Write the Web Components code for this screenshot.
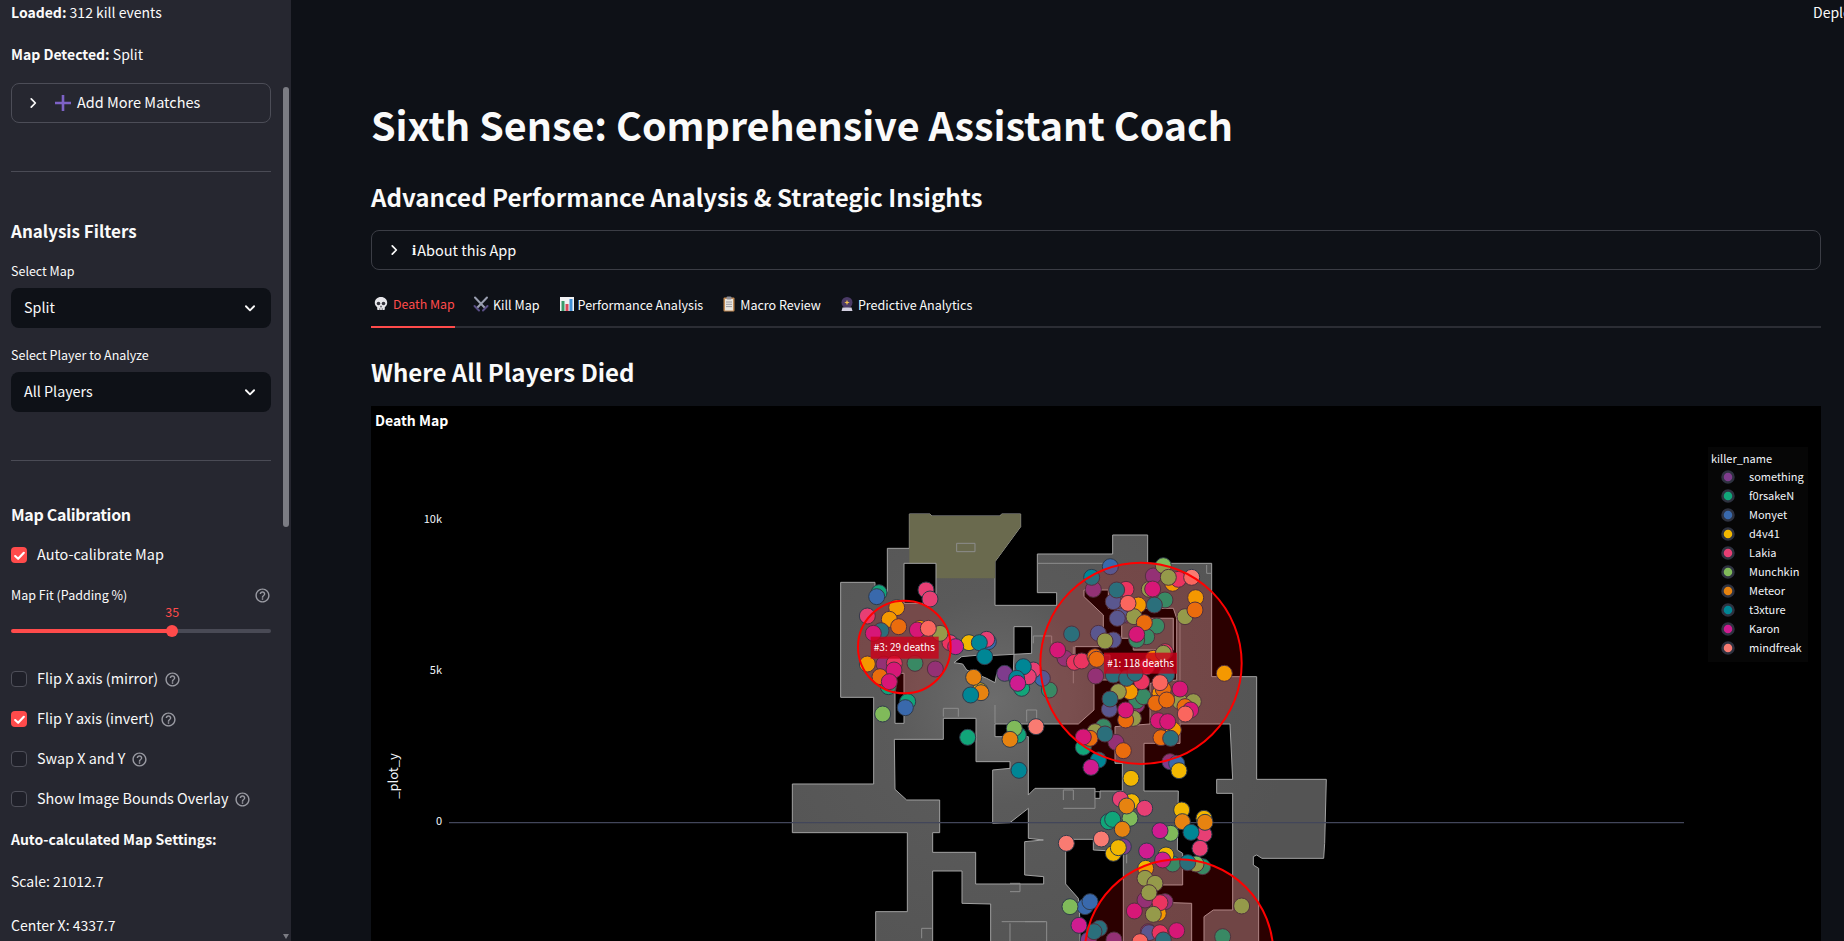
<!DOCTYPE html>
<html lang="en"><head><meta charset="utf-8"><title>Sixth Sense</title>
<style>
html,body{margin:0;height:100%;overflow:hidden;background:#0e1117}
body{font-family:"Noto Sans CJK SC","Source Sans Pro",sans-serif;color:#fafafa;font-size:14px}
</style></head><body>
<app-shell>
  <side-bar slot="side">
    <md-line style="margin-top:2px"><b>Loaded:</b> 312 kill events</md-line>
    <md-line style="margin-top:20px"><b>Map Detected:</b> Split</md-line>
    <st-expander style="margin-top:17px" compact><plus-icon slot="icon"></plus-icon>Add More Matches</st-expander>
    <side-rule style="margin-top:48px"></side-rule>
    <side-head style="margin-top:44px;font-size:17px">Analysis Filters</side-head>
    <st-select style="margin-top:15px" label="Select Map">Split</st-select>
    <st-select style="margin-top:17px" label="Select Player to Analyze">All Players</st-select>
    <side-rule style="margin-top:48px"></side-rule>
    <side-head style="margin-top:38px;font-size:16px;letter-spacing:-.33px">Map Calibration</side-head>
    <st-check style="margin-top:16px" checked>Auto-calibrate Map</st-check>
    <st-slider style="margin-top:20px" label="Map Fit (Padding %)" value="35" pct="62"></st-slider>
    <st-check style="margin-top:29px" help>Flip X axis (mirror)</st-check>
    <st-check style="margin-top:20px" checked help>Flip Y axis (invert)</st-check>
    <st-check style="margin-top:20px" help>Swap X and Y</st-check>
    <st-check style="margin-top:20px" help>Show Image Bounds Overlay</st-check>
    <md-line style="margin-top:20px"><b>Auto-calculated Map Settings:</b></md-line>
    <md-line style="margin-top:20px">Scale: 21012.7</md-line>
    <md-line style="margin-top:22px">Center X: 4337.7</md-line>
  </side-bar>
  <main-panel slot="main">
    <page-title level="1" style="margin-top:96px">Sixth Sense: Comprehensive Assistant Coach</page-title>
    <page-title level="2" style="margin-top:25px">Advanced Performance Analysis &amp; Strategic Insights</page-title>
    <st-expander style="margin-top:13px"><b slot="icon" style="font-family:'Liberation Serif',serif;font-size:15px;margin-right:-3px">i</b>About this App</st-expander>
    <tab-bar style="margin-top:16px"></tab-bar>
    <page-title level="3" style="margin-top:24px">Where All Players Died</page-title>
    <death-map style="margin-top:14px"></death-map>
  </main-panel>
</app-shell>
<script>
const def=(n,html,extra={})=>{customElements.define(n,class extends HTMLElement{
  connectedCallback(){ if(this.shadowRoot)return; const r=this.attachShadow({mode:'open'}); r.innerHTML=typeof html==='function'?html(this):html; extra.init&&extra.init(this,r);} });};
const chev='<svg width="14" height="14" viewBox="0 0 24 24" fill="none" stroke="#fafafa" stroke-width="3" stroke-linecap="round" stroke-linejoin="round"><path d="M9 5l7 7-7 7"/></svg>';
const help='<svg width="17" height="17" viewBox="0 0 24 24" fill="#9a9ba3"><path d="M11 18h2v-2h-2v2zm1-16C6.480 2 2 6.480 2 12s4.480 10 10 10 10-4.480 10-10S17.520 2 12 2zm0 18c-4.410 0-8-3.590-8-8s3.590-8 8-8 8 3.590 8 8-3.590 8-8 8zm0-14c-2.210 0-4 1.790-4 4h2c0-1.100.9-2 2-2s2 .9 2 2c0 2-3 1.750-3 5h2c0-2.250 3-2.500 3-5 0-2.210-1.790-4-4-4z"/></svg>';

def('app-shell',`<style>:host{display:flex;width:1844px;height:941px;overflow:hidden;background:#0e1117}</style><slot name="side"></slot><slot name="main"></slot>`);
def('side-bar',`<style>:host{display:block;position:relative;box-sizing:border-box;width:291px;height:941px;flex:none;background:#262730;padding:0 20px 0 11px;overflow:hidden}
.thumb{position:absolute;right:2px;top:87px;width:6px;height:440px;border-radius:3px;background:#7b7c83}
.arrow{position:absolute;right:2px;bottom:2px;width:0;height:0;border:3px solid transparent;border-top:5px solid #7b7c83;border-bottom:0}</style>
<slot></slot><div class="thumb"></div><div class="arrow"></div>`);
def('md-line',`<style>:host{display:block;height:22px;line-height:20px;font-size:14px;white-space:nowrap;color:#fafafa}::slotted(b){font-weight:700}</style><slot></slot>`);
def('side-rule',`<style>:host{display:block;height:1px;background:#4a4b55}</style>`);
def('side-head',`<style>:host{display:block;height:30px;line-height:30px;font-size:20px;font-weight:700;white-space:nowrap}</style><slot></slot>`);
def('plus-icon',`<style>:host{display:inline-flex}</style><svg width="16" height="16" viewBox="0 0 16 16" fill="#7d62c6"><path d="M6.700 0h2.600v6.700H16v2.600H9.300V16H6.700V9.300H0V6.700h6.700z"/></svg>`);
def('st-expander',h=>{const k=h.hasAttribute('compact');return `<style>:host{display:block;box-sizing:border-box;height:40px;border:1px solid ${k?'#4c4d57':'#3b3d45'};border-radius:8px}
.r{display:flex;align-items:center;height:38px;padding-left:${k?14:15}px;font-size:14.500px;white-space:nowrap}
.c{display:flex;margin-right:7px}.i{display:inline-flex;align-items:center;margin-left:${k?8:4}px}.t{margin-left:${k?6:4}px;line-height:20px;padding-bottom:${k?2:0}px}</style>
<div class="r"><span class="c">${chev}</span><span class="i"><slot name="icon"></slot></span><span class="t"><slot></slot></span></div>`});
def('st-select',h=>`<style>:host{display:block}
.l{height:20px;line-height:20px;font-size:12.500px;margin-bottom:7px;white-space:nowrap}
.b{display:flex;align-items:center;justify-content:space-between;box-sizing:border-box;height:40px;border-radius:8px;background:#0e1117;padding:0 14px 2px 13px;font-size:14.300px;line-height:22px}
svg{display:block;margin-top:2px}</style><div class="l">${h.getAttribute('label')}</div>
<div class="b"><slot></slot><svg width="14" height="14" viewBox="0 0 24 24" fill="none" stroke="#fafafa" stroke-width="3.200" stroke-linecap="round" stroke-linejoin="round"><path d="M5 9l7 7 7-7"/></svg></div>`);
def('st-check',h=>{const c=h.hasAttribute('checked');return `<style>:host{display:flex;align-items:center;height:20px;font-size:14.400px;white-space:nowrap}
.x{box-sizing:border-box;width:16px;height:16px;border-radius:4px;margin-right:10px;display:flex;align-items:center;justify-content:center;${c?'background:#ff4b4b':'background:#1f2029;border:1px solid #4e4f59'}}
.s{line-height:20px;padding-bottom:2px}
.h{display:flex;margin-left:6px}</style><span class="x">${c?'<svg width="13" height="13" viewBox="0 0 24 24" fill="none" stroke="#fff" stroke-width="4" stroke-linecap="round" stroke-linejoin="round"><path d="M4 13l5.500 5L20 7"/></svg>':''}</span><span class="s"><slot></slot></span>${h.hasAttribute('help')?`<span class="h">${help}</span>`:''}`});
def('st-slider',h=>{const p=h.getAttribute('pct');return `<style>:host{display:block}
.top{display:flex;justify-content:space-between;align-items:center;height:20px;line-height:20px;font-size:12.500px;white-space:nowrap}
.h{display:flex}
.w{position:relative;height:35px}
.v{position:absolute;left:${p}%;top:-3px;transform:translateX(-50%);color:#ff4b4b;font-size:12.500px;line-height:20px}
.t{position:absolute;left:0;right:0;top:24px;height:4px;border-radius:2px;background:linear-gradient(90deg,#ff4b4b ${p}%,#494a55 ${p}%)}
.d{position:absolute;left:${p}%;top:20px;width:12px;height:12px;border-radius:50%;background:#ff4b4b;transform:translateX(-50%)}</style>
<div class="top"><span>${h.getAttribute('label')}</span><span class="h">${help}</span></div>
<div class="w"><span class="v">${h.getAttribute('value')}</span><div class="t"></div><div class="d"></div></div>`});
def('main-panel',`<style>:host{display:block;position:relative;box-sizing:border-box;flex:1;height:941px;padding:0 23px 0 80px;overflow:hidden}
.dep{position:absolute;left:1522px;top:2px;line-height:20px;font-size:14px;white-space:nowrap}</style><div class="dep">Deploy</div><slot></slot>`);
def('page-title',h=>{const l=h.getAttribute('level');const s={1:[56,39.400,700],2:[40,24.100,600],3:[40,24,600]}[l];return `<style>:host{display:block;height:${s[0]}px;line-height:${s[0]}px;font-size:${s[1]}px;font-weight:${s[2]};white-space:nowrap}</style><slot></slot>`});

const tabIcons={
skull:'<svg width="16" height="16" viewBox="0 0 16 16"><path fill="#e6e6ea" d="M8 1C4.200 1 1.800 3.500 1.800 6.800c0 2 .9 3.500 2.400 4.400V13c0 .6.400 1 1 1h5.600c.6 0 1-.4 1-1v-1.800c1.500-.9 2.400-2.400 2.400-4.400C14.200 3.500 11.800 1 8 1z"/><circle cx="5.500" cy="7.500" r="1.800" fill="#33333c"/><circle cx="10.500" cy="7.500" r="1.800" fill="#33333c"/><path fill="#33333c" d="M8 9.300l1 1.900H7zM6.500 12.200h.7v1.800h-.7zM8.800 12.200h.7v1.800h-.7z"/></svg>',
swords:'<svg width="16" height="16" viewBox="0 0 16 16" fill="none" stroke-linecap="round"><path d="M2 1.500L12 12M14 1.500L4 12" stroke="#9a9fb0" stroke-width="2"/><path d="M10 14.500L14.500 10M6 14.500L1.500 10" stroke="#5a4f86" stroke-width="2"/></svg>',
chart:'<svg width="16" height="16" viewBox="0 0 16 16"><rect x="1" y="1" width="14" height="14" fill="#f1f2f4"/><rect x="2.500" y="5" width="3" height="10" fill="#3a9a6b"/><rect x="6.500" y="8" width="3" height="7" fill="#d9475a"/><rect x="10.500" y="3" width="3" height="12" fill="#3f8fd6"/></svg>',
clip:'<svg width="16" height="16" viewBox="0 0 16 16"><rect x="2.500" y="1.500" width="11" height="14" rx="1" fill="#c08a55"/><rect x="4" y="3" width="8" height="11.500" fill="#e9e6df"/><rect x="5.500" y=".5" width="5" height="3" rx="1" fill="#8d8d95"/><path d="M5 6h6M5 8.300h6M5 10.600h6" stroke="#9a9aa2" stroke-width="1"/></svg>',
ball:'<svg width="16" height="16" viewBox="0 0 16 16"><circle cx="8" cy="6.500" r="5.500" fill="#4a3a66"/><path d="M8 3.800l.7 2 2 .7-2 .7-.7 2-.7-2-2-.7 2-.7z" fill="#f2c14e"/><path d="M3.500 11.500h9l1 3.500h-11z" fill="#d3cfe0"/></svg>'};
def('tab-bar',`<style>:host{display:flex;box-sizing:border-box;height:42px;border-bottom:2px solid #2b2d34;font-size:12.550px;white-space:nowrap}
a{display:flex;align-items:center;gap:3px;box-sizing:border-box;height:42px;padding:0 3px 4px 3px;border-bottom:2px solid transparent;color:#fafafa}
a.on{color:#ff4b4b;border-color:#ff4b4b}
svg{display:block;flex:none}</style>
<a class="on" style="width:84px;font-size:12.400px;gap:4px;padding-left:2px">${tabIcons.skull}Death Map</a>
<a style="margin-left:15px;gap:4px">${tabIcons.swords}Kill Map</a>
<a style="margin-left:13px">${tabIcons.chart}Performance Analysis</a>
<a style="margin-left:12px">${tabIcons.clip}Macro Review</a>
<a style="margin-left:12px">${tabIcons.ball}Predictive Analytics</a>`);

const COL={P:'#7F3C8D',F:'#11A579',M:'#3969AC',D:'#F2B701',L:'#E73F74',N:'#80BA5A',E:'#E68310',T:'#008695',K:'#CF1C90',R:'#f97b72'};
const ORDER='PFMDLNETKR';
const NAMES=['something','f0rsakeN','Monyet','d4v41','Lakia','Munchkin','Meteor','t3xture','Karon','mindfreak'];
const DOTS=`F297,278 M290,290 L438,270 L450,297 L262,348 D350,323 D328,358 E356,380 T303,392 K280,400 K412,390 R445,385 N480,400 D420,385 L510,428 K527,440 D262,492 P312,492 E300,530 K342,510 L343,490 K328,545 F325,560 F405,490 P466,507 F383,605 M376,623 N308,642
D567,428 M625,425 L620,418 T598,428 T614,470 E581,532 D600,572 E603,578 T572,585 P674,520 T730,500 L760,510 T710,535 F725,565 K713,550 L745,530 M787,535 F808,570 N703,685 F715,705 E690,718 R768,680 F563,712 T717,811
M991,200 T935,232 P940,268 N1150,197 P1120,228 N1165,232 L1195,238 D1178,250 R1235,232 N1108,268 K1118,267 T1010,270 L1038,268 M1000,305 R1044,310 D1075,315 T1123,315 F1155,300 D1247,293 E1245,330 N1215,350 M1022,348 M1012,355 N1062,350 E1093,368 F1130,378 P1040,345 M955,400 M1000,420 N975,423 T875,402 F1100,410 F1070,420 K1070,403 K833,450 L883,487 P855,475 L905,483 E945,470 E950,478 P947,528 D1120,475 L1155,455 N1150,460 L1100,500 T1000,525 T1040,535 T1065,520 T1160,525 L1085,545 R1140,548 K1200,567 E1150,568 D1140,580 N1015,575 D1050,575 T990,597 M988,628 F1070,603 P1070,615 F1090,590 K1037,630 E1037,660 N1060,655 E1127,610 E1160,600 N1200,605 N1240,605 E1215,620 K1232,630 R1216,642 K1135,662 K1163,665 D1180,690 E1143,713 T1172,715 F970,680 N945,695 E930,715 K910,711 T975,702 F910,742 P1008,727 E1030,752 T955,780 K933,802 P1170,785 M1190,790 D1197,812 D1333,520 D1053,835
L1021,897 D1055,905 E1040,918 L1094,925 D1205,930 E1207,965 D1272,955 E1275,967 L1272,1003 T1233,997 F985,965 F998,958 N1050,955 E1027,988 K1140,992 N1172,1000 R964,1017 R859,1030 P1030,1040 D1000,1060 D1015,1043 K1100,1053 L1260,1045 D1158,1065 K1148,1080 F1178,1092 T1223,1088 N1248,1092 F1268,1100 D1097,1105
N1095,1135 N1125,1150 N1107,1178 P1095,1200 P1155,1205 L1140,1208 K1063,1233 D1135,1240 N1120,1243 N1385,1218 F1328,1310 P1105,1295 M1107,1298 L1140,1298 K1190,1292 T1150,1320 N870,1220 M915,1220 M930,1205 K897,1276 T958,1285 T942,1295 P1002,1320 R1080,1325 P925,1320`;
const OUTER='388,42 450,42 455,48 660,48 665,42 722,42 722,80 645,185 645,316 830,316 830,278 772,278 772,162 998,162 998,105 1103,105 1103,190 1295,190 1295,530 1430,530 1430,838 1639,838 1634,1030 1631,1075 1446,1075 1430,1065 1420,1070 1420,1095 1436,1105 1436,1340 287,1340 287,1235 382,1235 382,998 37,998 37,852 281,852 281,592 182,592 182,247 285,247 285,275 322,275 322,145 388,145';
const HOLES=[
'372,190 468,190 468,310 372,310',
'345,520 372,520 372,580 372,670 345,670',
'702,380 755,380 755,460 645,466 600,465 545,470 522,488 548,492 560,510 620,535 645,548 650,522 700,515 702,460',
'343,718 490,718 490,655 588,655 588,785 690,785 690,805 638,810 638,970 690,968 745,925 745,1015 790,1020 734,1025 734,1125 791,1130 791,1152 587,1152 587,1057 458,1057 458,998 479,998 479,900 380,900 345,868',
'645,672 895,672 942,630 942,540 990,540 990,465 885,465 885,440 970,440 970,345 912,290 912,270 985,270 985,325 1180,325 1190,355 1190,540 1110,550 1110,672 1005,680 1005,790 1027,790 1027,873 960,873 960,895 945,895 945,865 765,865 745,885 745,710 645,710',
'1092,873 1092,730 1200,730 1200,672 1350,672 1358,838 1310,838 1310,880 1358,880 1358,1230 1300,1230 1272,1250 1272,1340 1235,1340 1235,1210 1095,1205 1095,1155 1208,1155 1208,1060 1192,1050 1195,873',
'857,1018 940,1018 940,1050 1030,1055 1030,1340 900,1340 900,1260 895,1195 857,1152',
'458,1113 546,1113 546,1210 632,1212 632,1340 458,1340'];
const DETAIL='M530 130h55v25h-55zM490 650v-25h45v25M740 665v-35h30v35M760 430v-22h55v22M645 615v55M880 550v-110M772 190h226M1200 360v310M1025 355h155v95h-120v-35h-35zM1280 195v25h15M850 900v-30h30v30M1040 1090v-30M690 1175h30v-25h-30M665 1265h135v60M690 1270v55M735 1265h60M425 1315v-30h30M945 875h15M850 925h95v-30';
const lx=x=>409+x/3, ly=y=>94+y/3;
def('death-map',()=>{
 const dots=DOTS.split(/\s+/).filter(Boolean).map(s=>({c:s[0],x:+s.slice(1).split(',')[0],y:+s.split(',')[1]}));
 dots.sort((a,b)=>ORDER.indexOf(a.c)-ORDER.indexOf(b.c));
 const dotSvg=dots.map(d=>`<circle cx="${d.x}" cy="${d.y}" r="24" fill="${COL[d.c]}" stroke="#2f3a4a" stroke-width="3"/>`).join('');
 const legend=NAMES.map((n,i)=>`<circle cx="1357" cy="${71+i*19}" r="5.500" fill="${COL[ORDER[i]]}" stroke="#2e3240" stroke-width="2.500"/><text x="1378" y="${75+i*19}">${n}</text>`).join('');
 return `<style>:host{display:block;width:1450px;height:535px;background:#000;overflow:hidden}
 svg{display:block;font-family:"Noto Sans CJK SC",sans-serif}
 .lg text{font-size:11px;fill:#f2f5fa}.tick{font-size:11px;fill:#f2f5fa}</style>
 <svg width="1450" height="535" viewBox="0 0 1450 535">
 <defs><radialGradient id="g" gradientUnits="userSpaceOnUse" cx="640" cy="600" r="900"><stop offset="0" stop-color="#6c6c6c"/><stop offset=".35" stop-color="#5a5a5a"/><stop offset="1" stop-color="#545454"/></radialGradient></defs>
 <text x="4" y="20" fill="#fff" font-size="14" font-weight="700">Death Map</text>
 <g class="tick" text-anchor="end"><text x="71" y="117">10k</text><text x="71" y="268">5k</text><text x="71" y="419">0</text></g>
 <text class="tick" transform="translate(27,370) rotate(-90)" text-anchor="middle" style="font-size:13px">_plot_y</text>
 <g transform="translate(409,94) scale(.33333)">
  <polygon points="${OUTER}" fill="url(#g)" stroke="#a3a3a3" stroke-width="3" stroke-linejoin="round"/>
  <polygon points="388,42 450,42 455,48 660,48 665,42 722,42 722,80 645,185 645,235 468,235 468,190 388,190" fill="#6a6a4e" stroke="none"/>
  ${HOLES.map(h=>`<polygon points="${h}" fill="#000" stroke="#a3a3a3" stroke-width="3" stroke-linejoin="round"/>`).join('')}
  <polygon points="1025,355 1180,355 1180,450 1060,450 1060,415 1025,415" fill="#5a5a5a" stroke="#9a9a9a" stroke-width="3"/>
  <path d="${DETAIL}" fill="none" stroke="#8d8d8d" stroke-width="3"/>
 </g>
 <path d="M78 416.700H1313" stroke="#42465a" stroke-width="1.200"/>
 <g transform="translate(409,94) scale(.33333)">
  ${dotSvg}
  <circle cx="1083" cy="490" r="302" fill="rgba(255,0,0,.17)" stroke="#f00" stroke-width="6"/>
  <circle cx="373" cy="441" r="139" fill="rgba(255,0,0,.17)" stroke="#f00" stroke-width="6"/>
  <circle cx="1197" cy="1361" r="283" fill="rgba(255,0,0,.17)" stroke="#f00" stroke-width="6"/>
 </g>
 <rect x="${lx(272)}" y="${ly(410)}" width="68" height="22" fill="rgba(205,0,25,.8)"/>
 <text x="${lx(373)}" y="${ly(441)+3.500}" text-anchor="middle" fill="#fff" font-size="10">#3: 29 deaths</text>
 <rect x="${lx(972)}" y="${ly(458)}" width="73" height="21" fill="rgba(205,0,25,.8)"/>
 <text x="${lx(1082)}" y="${ly(490)+3.500}" text-anchor="middle" fill="#fff" font-size="10">#1: 118 deaths</text>
 <g class="lg"><rect x="1337" y="41" width="100" height="215" fill="#060606"/><text x="1340" y="57">killer_name</text>${legend}</g>
 </svg>`});
</script>
</body></html>
